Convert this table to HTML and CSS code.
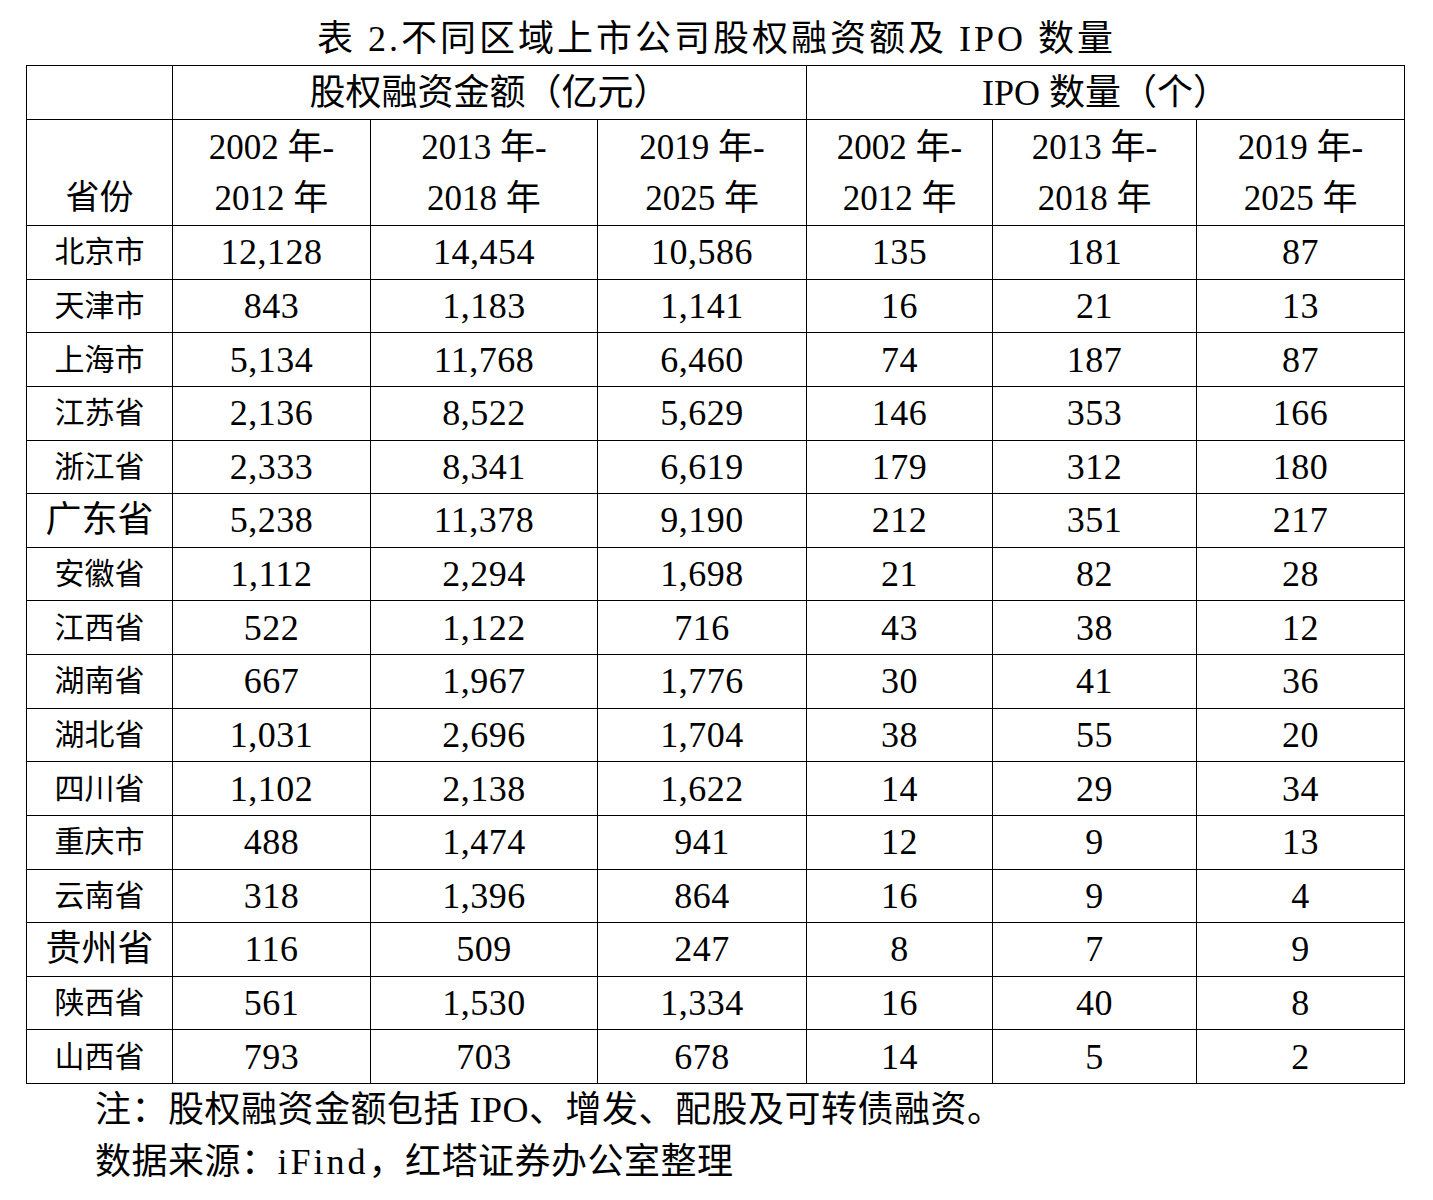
FILE: index.html
```html
<!DOCTYPE html>
<html lang="zh-CN">
<head>
<meta charset="utf-8">
<title>表 2. 不同区域上市公司股权融资额及 IPO 数量</title>
<link rel="stylesheet" href="styles.css">
</head>
<body>
<div class="page">
  <h1 class="title">表 2.不同区域上市公司股权融资额及 IPO 数量</h1>
  <table class="data">
    <colgroup>
      <col class="c0"><col class="c1"><col class="c2"><col class="c3"><col class="c4"><col class="c5"><col class="c6">
    </colgroup>
    <thead>
      <tr class="h1">
        <th></th>
        <th colspan="3">股权融资金额（亿元）</th>
        <th colspan="3">IPO 数量（个）</th>
      </tr>
      <tr class="h2">
        <th class="prov-head">省份</th>
        <th>2002 年-<br>2012 年</th>
        <th>2013 年-<br>2018 年</th>
        <th>2019 年-<br>2025 年</th>
        <th>2002 年-<br>2012 年</th>
        <th>2013 年-<br>2018 年</th>
        <th>2019 年-<br>2025 年</th>
      </tr>
    </thead>
    <tbody>
      <tr><td class="prov">北京市</td><td>12,128</td><td>14,454</td><td>10,586</td><td>135</td><td>181</td><td>87</td></tr>
      <tr><td class="prov">天津市</td><td>843</td><td>1,183</td><td>1,141</td><td>16</td><td>21</td><td>13</td></tr>
      <tr><td class="prov">上海市</td><td>5,134</td><td>11,768</td><td>6,460</td><td>74</td><td>187</td><td>87</td></tr>
      <tr><td class="prov">江苏省</td><td>2,136</td><td>8,522</td><td>5,629</td><td>146</td><td>353</td><td>166</td></tr>
      <tr><td class="prov">浙江省</td><td>2,333</td><td>8,341</td><td>6,619</td><td>179</td><td>312</td><td>180</td></tr>
      <tr><td class="prov big">广东省</td><td>5,238</td><td>11,378</td><td>9,190</td><td>212</td><td>351</td><td>217</td></tr>
      <tr><td class="prov">安徽省</td><td>1,112</td><td>2,294</td><td>1,698</td><td>21</td><td>82</td><td>28</td></tr>
      <tr><td class="prov">江西省</td><td>522</td><td>1,122</td><td>716</td><td>43</td><td>38</td><td>12</td></tr>
      <tr><td class="prov">湖南省</td><td>667</td><td>1,967</td><td>1,776</td><td>30</td><td>41</td><td>36</td></tr>
      <tr><td class="prov">湖北省</td><td>1,031</td><td>2,696</td><td>1,704</td><td>38</td><td>55</td><td>20</td></tr>
      <tr><td class="prov">四川省</td><td>1,102</td><td>2,138</td><td>1,622</td><td>14</td><td>29</td><td>34</td></tr>
      <tr><td class="prov">重庆市</td><td>488</td><td>1,474</td><td>941</td><td>12</td><td>9</td><td>13</td></tr>
      <tr><td class="prov">云南省</td><td>318</td><td>1,396</td><td>864</td><td>16</td><td>9</td><td>4</td></tr>
      <tr><td class="prov big">贵州省</td><td>116</td><td>509</td><td>247</td><td>8</td><td>7</td><td>9</td></tr>
      <tr><td class="prov">陕西省</td><td>561</td><td>1,530</td><td>1,334</td><td>16</td><td>40</td><td>8</td></tr>
      <tr><td class="prov">山西省</td><td>793</td><td>703</td><td>678</td><td>14</td><td>5</td><td>2</td></tr>
    </tbody>
  </table>
  <p class="note">注：股权融资金额包括 IPO、增发、配股及可转债融资。</p>
  <p class="note">数据来源：<span class="latin">iFind</span>，红塔证券办公室整理</p>
</div>
</body>
</html>
```

FILE: styles.css
```css
html, body {
  margin: 0;
  padding: 0;
  background: #ffffff;
}

body {
  color: #000000;
  font-family: "Liberation Serif", "Noto Sans CJK SC", serif;
}

.page {
  width: 1433px;
}

.title {
  margin: 0;
  padding-top: 13px;
  height: 52px;
  line-height: 52px;
  text-align: center;
  font-size: 36px;
  font-weight: normal;
  letter-spacing: 3px;
}

.data {
  margin-left: 26px;
  width: 1378px;
  table-layout: fixed;
  border-collapse: collapse;
}

.c0 { width: 146px; }
.c1 { width: 198px; }
.c2 { width: 227px; }
.c3 { width: 209px; }
.c4 { width: 186px; }
.c5 { width: 204px; }
.c6 { width: 208px; }

.data th,
.data td {
  border: 1px solid #000000;
  padding: 0;
  text-align: center;
  vertical-align: middle;
  font-weight: normal;
}

.h1 {
  height: 54px;
}

.h1 th {
  font-size: 36px;
  line-height: 40px;
}

.h2 {
  height: 106px;
}

.h2 th {
  font-size: 35px;
  line-height: 51px;
}

.h2 .prov-head {
  font-size: 34px;
  vertical-align: bottom;
  padding-bottom: 2px;
}

.data tbody tr {
  height: 53.625px;
}

.data td {
  font-size: 36px;
  line-height: 40px;
  letter-spacing: 0.5px;
}

.data td.prov {
  font-size: 30px;
  letter-spacing: 0;
}

.data td.prov.big {
  font-size: 36px;
}

.note {
  margin: 0;
  padding-left: 95px;
  height: 52px;
  line-height: 52px;
  font-size: 36px;
  letter-spacing: 0.5px;
}

.note .latin {
  letter-spacing: 3px;
}
```
